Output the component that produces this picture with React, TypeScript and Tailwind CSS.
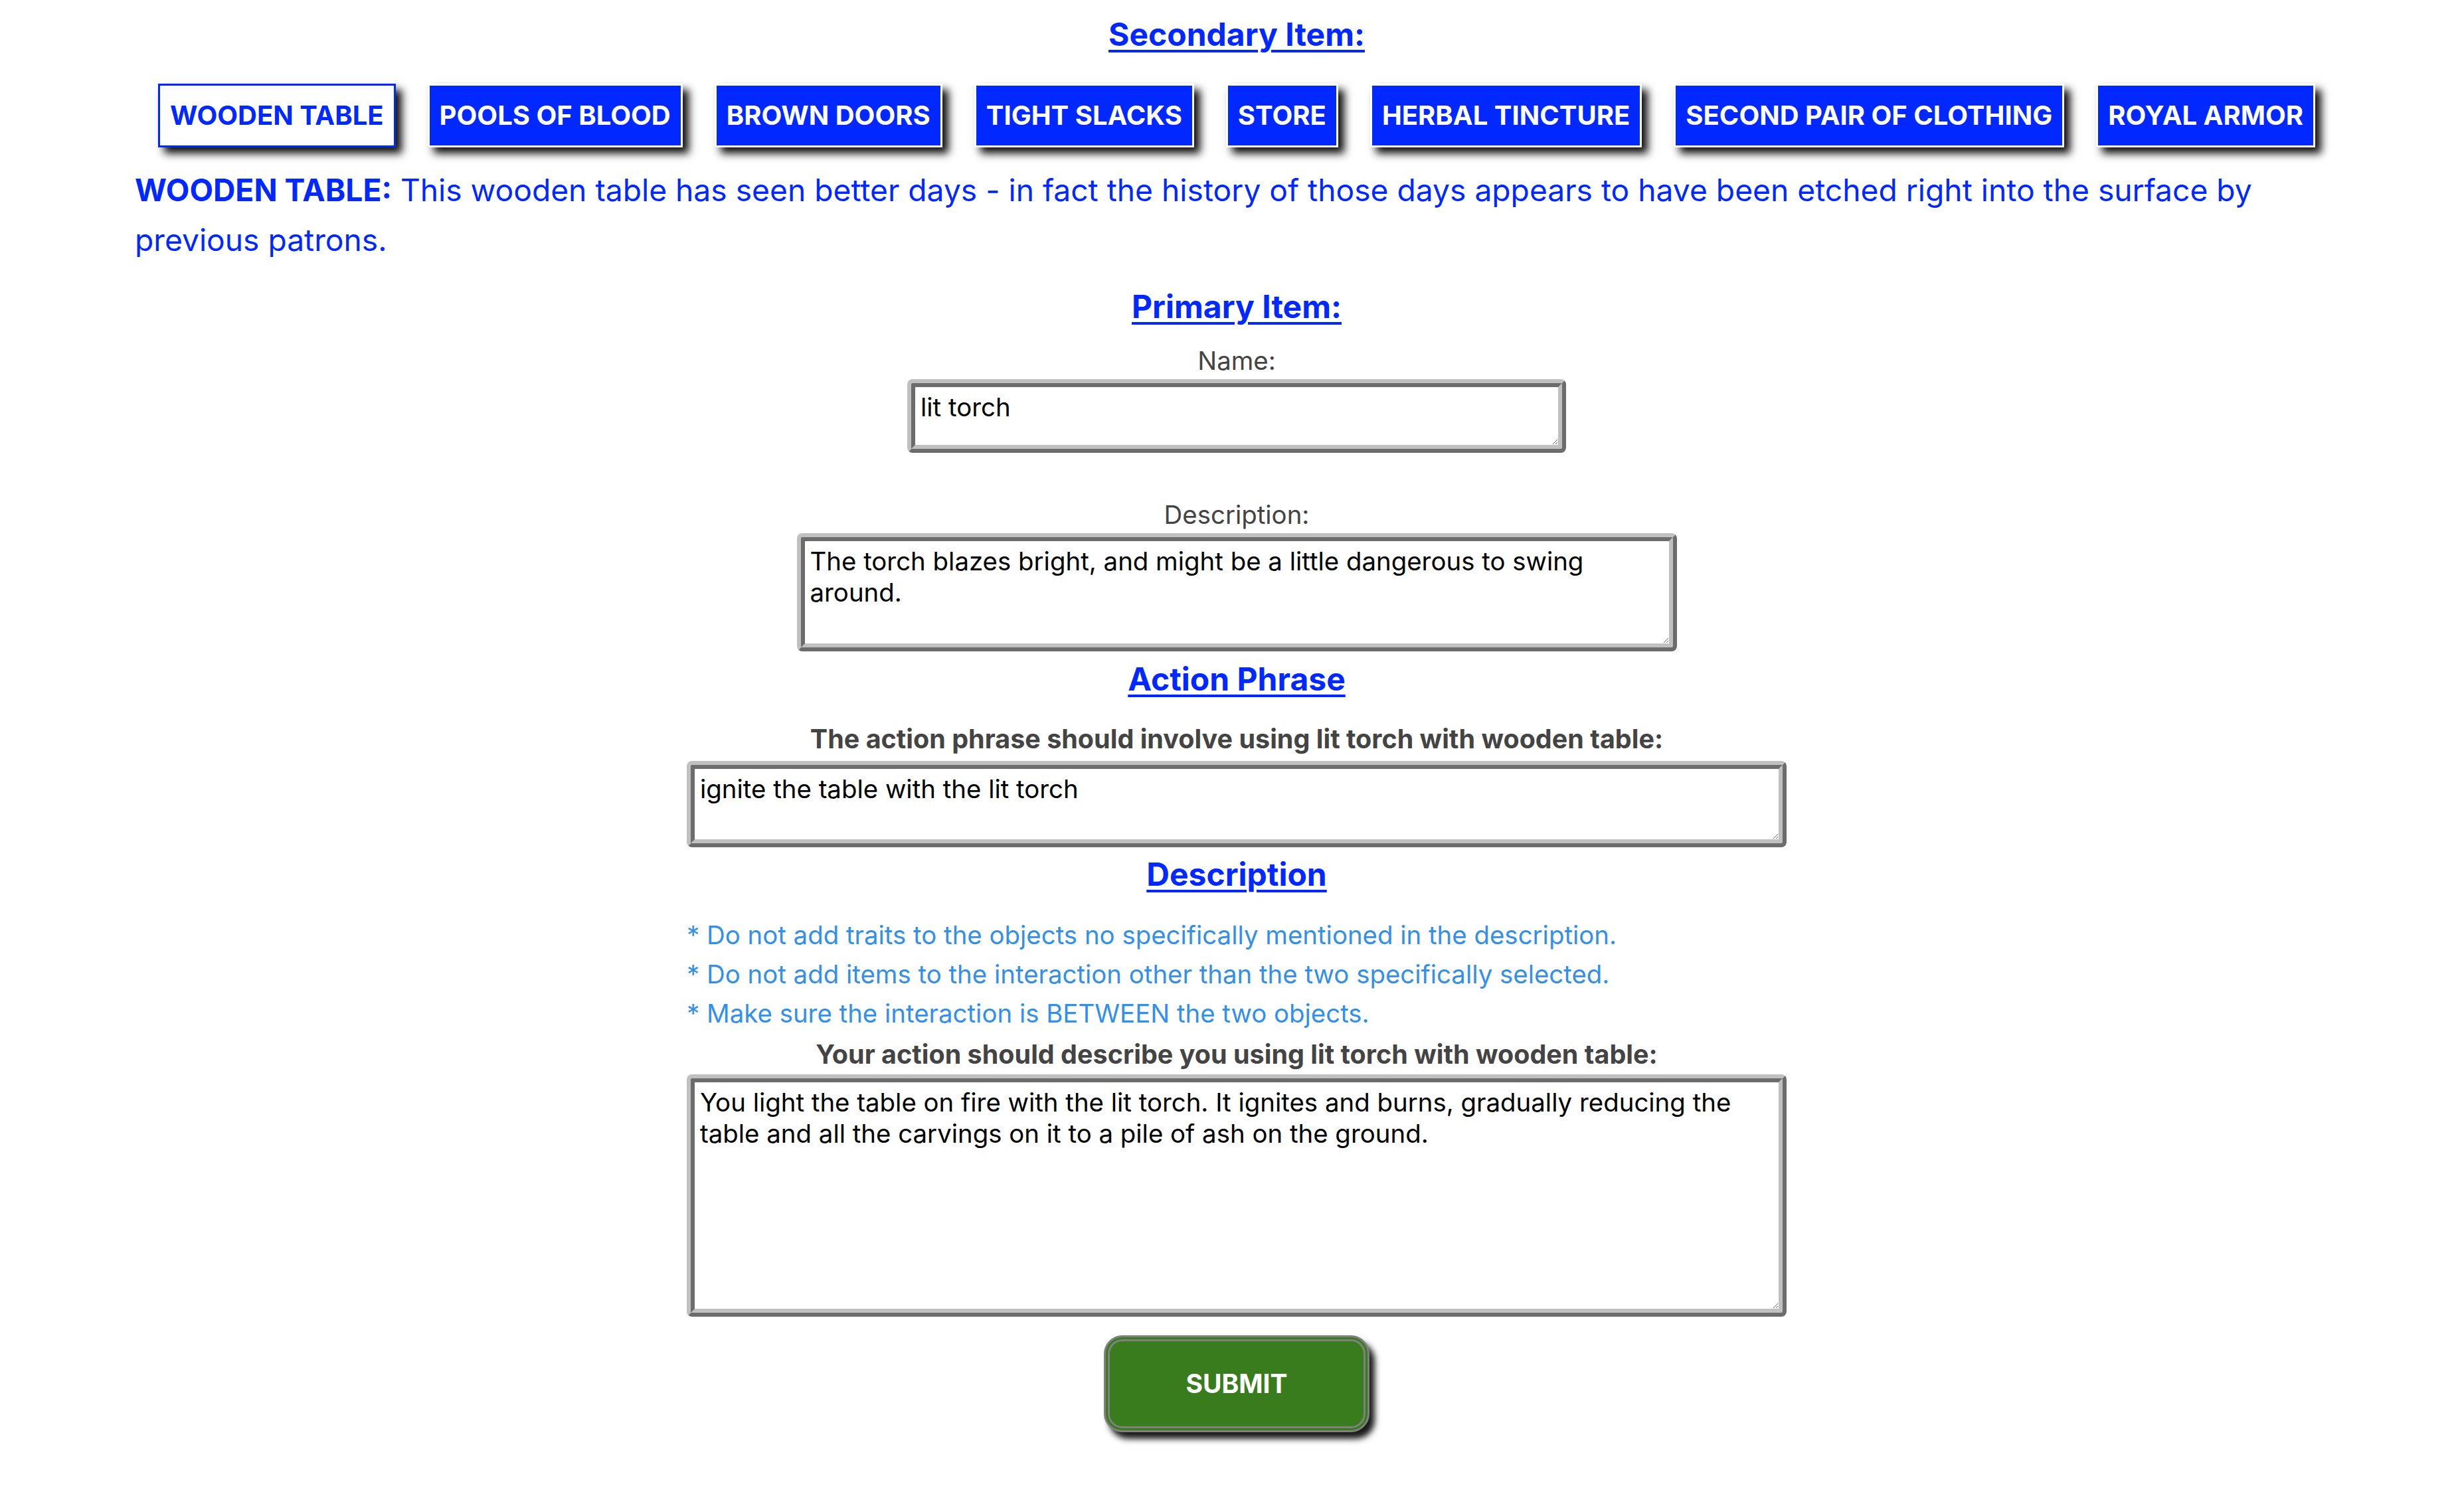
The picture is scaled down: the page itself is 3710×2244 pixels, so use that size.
import React from "react";

const items = [
  "WOODEN TABLE",
  "POOLS OF BLOOD",
  "BROWN DOORS",
  "TIGHT SLACKS",
  "STORE",
  "HERBAL TINCTURE",
  "SECOND PAIR OF CLOTHING",
  "ROYAL ARMOR",
];

const taClass =
  "block bg-white text-black text-[38.4px] leading-[47px] [border-style:ridge] border-[12px] border-[#c0c0c0] rounded-[8px] px-[8px] py-[7px] outline-none font-['Inter',sans-serif]";

function Heading({ children, className = "" }: { children: React.ReactNode; className?: string }) {
  return (
    <h2 className={"text-[48px] leading-[60px] font-bold text-[#0028ff] underline underline-offset-[6px] decoration-[4px] " + className}>
      {children}
    </h2>
  );
}

export default function App() {
  return (
    <div className="h-[2244px] overflow-hidden bg-white font-['Inter',sans-serif] flex flex-col items-center pl-[217px] pr-[203px] pt-[22px]">
      <Heading>Secondary Item:</Heading>

      <div className="mt-[44px] flex justify-center gap-[48px]">
        {items.map((it, i) => (
          <button
            key={it}
            className={
              "h-[96px] px-[15px] border-[3px] text-[40px] font-bold whitespace-nowrap shadow-[9px_9px_12px_rgba(0,0,0,0.95)] " +
              (i === 0
                ? "bg-white border-[#0028ff] text-[#0028ff]"
                : "bg-[#0028ff] border-white text-white")
            }
          >
            {it}
          </button>
        ))}
      </div>

      <p className="mt-[27px] -ml-[14px] self-stretch text-[46.2px] leading-[75px] text-[#0028ff]">
        <span className="font-bold">WOODEN TABLE:</span> This wooden table has seen better days - in fact the history of those days appears to have been etched right into the surface by previous patrons.
      </p>

      <Heading className="mt-[33px]">Primary Item:</Heading>

      <label className="mt-[27px] text-[38.4px] leading-[48px] text-[#444]">Name:</label>
      <textarea className={taClass + " mt-[4px] w-[992px] h-[111px]"} defaultValue="lit torch" />

      <label className="mt-[69px] text-[38.4px] leading-[48px] text-[#444]">Description:</label>
      <textarea
        className={taClass + " mt-[4px] w-[1325px] h-[178px]"}
        defaultValue="The torch blazes bright, and might be a little dangerous to swing around."
      />

      <Heading className="mt-[12px]">Action Phrase</Heading>

      <label className="mt-[36px] text-[39.5px] leading-[48px] font-bold text-[#444]">
        The action phrase should involve using lit torch with wooden table:
      </label>
      <textarea
        className={taClass + " mt-[9px] w-[1656px] h-[130px]"}
        defaultValue="ignite the table with the lit torch"
      />

      <Heading className="mt-[11px]">Description</Heading>

      <div className="mt-[32px] w-[1656px] text-[38.4px] leading-[59px] text-[#3390ea]">
        <p>* Do not add traits to the objects no specifically mentioned in the description.</p>
        <p>* Do not add items to the interaction other than the two specifically selected.</p>
        <p>* Make sure the interaction is BETWEEN the two objects.</p>
      </div>

      <label className="mt-[8px] text-[39.5px] leading-[48px] font-bold text-[#444]">
        Your action should describe you using lit torch with wooden table:
      </label>
      <textarea
        className={taClass + " mt-[6px] w-[1656px] h-[365px]"}
        defaultValue="You light the table on fire with the lit torch. It ignites and burns, gradually reducing the table and all the carvings on it to a pile of ash on the ground."
      />

      <button className="mt-[28px] w-[400px] h-[146px] shrink-0 rounded-[28px] border-[9px] border-double border-[#808080] bg-[#387c1d] text-white text-[39px] font-bold shadow-[8px_10px_10px_rgba(0,0,0,0.9)]">
        SUBMIT
      </button>
    </div>
  );
}
